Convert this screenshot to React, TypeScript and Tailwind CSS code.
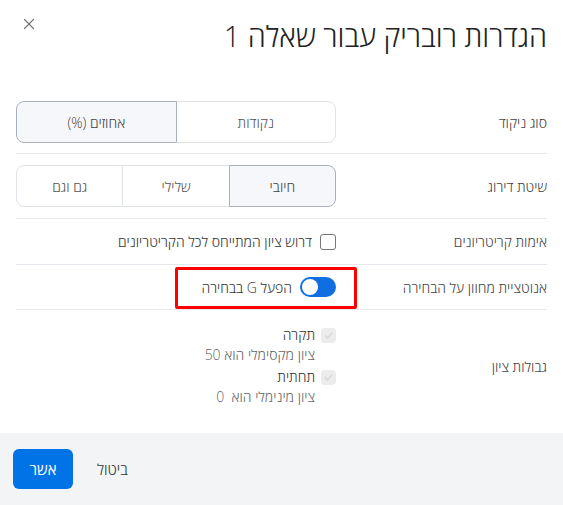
import { X } from "lucide-react";

function Segmented({ items, selected }: { items: string[]; selected: number }) {
	return (
		<div className="flex h-[42px] w-full">
			{items.map((item, i) => (
				<div
					key={item}
					className={
						"flex flex-1 items-center justify-center border text-[14px] " +
						(i > 0 ? "-mr-px " : "") +
						(i === 0 ? "rounded-r-lg " : "") +
						(i === items.length - 1 ? "rounded-l-lg " : "") +
						(i === selected
							? "relative z-10 border-[#aab1bd] bg-[#f5f7fa] text-[#444]"
							: "border-[#dfe2e8] bg-white text-[#555]")
					}
				>
					{item}
				</div>
			))}
		</div>
	);
}

function Row({
	label,
	children,
	last,
	className,
}: {
	label: string;
	children: React.ReactNode;
	last?: boolean;
	className?: string;
}) {
	return (
		<div
			className={
				"grid grid-cols-[211px_1fr] items-center " +
				(last ? "" : "border-b border-[#e6e8ee] ") +
				(className ?? "")
			}
		>
			<div className="text-[14px] text-[#444]">{label}</div>
			<div>{children}</div>
		</div>
	);
}

function DisabledCheck() {
	return (
		<div className="flex h-[15px] w-[15px] shrink-0 items-center justify-center rounded-sm bg-[#ececec]">
			<svg width="11" height="11" viewBox="0 0 12 12" fill="none">
				<path d="M2.5 6.2 5 8.6 9.6 3.4" stroke="#d6d6d6" strokeWidth="1.6" strokeLinecap="round" strokeLinejoin="round" />
			</svg>
		</div>
	);
}

export default function App() {
	return (
		<div
			dir="rtl"
			className="flex h-[505px] w-[563px] flex-col bg-white font-['Open_Sans','Liberation_Sans',sans-serif] font-light"
		>
			{/* כותרת */}
			<div className="flex h-[91px] items-start justify-between px-4 pt-[15px]">
				<h1 className="text-[29px] font-light leading-[42px] text-[#222]">הגדרות רובריק עבור שאלה 1</h1>
				<button className="ml-[4px] mt-0 text-[#777]">
					<X size={18} strokeWidth={1.6} />
				</button>
			</div>

			<div className="flex-1 px-4">
				<Row label="סוג ניקוד" className="py-[10px]">
					<Segmented items={["נקודות", "אחוזים (%)"]} selected={1} />
				</Row>
				<Row label="שיטת דירוג" className="py-[11px]">
					<Segmented items={["חיובי", "שלילי", "גם וגם"]} selected={0} />
				</Row>
				<Row label="אימות קריטריונים" className="h-[46px]">
					<label className="flex items-center gap-2 text-[14px] text-[#333]">
						<span className="h-[16px] w-[16px] shrink-0 rounded-[3px] border border-[#777] bg-white" />
						דרוש ציון המתייחס לכל הקריטריונים
					</label>
				</Row>
				<Row label="אנוטציית מחוון על הבחירה" className="h-[45px]">
					<div className="relative flex w-fit items-center gap-2">
						<div className="flex h-[20px] w-[36px] items-center justify-end rounded-full bg-[#0f6fe0] p-[2px]">
							<div className="h-[16px] w-[16px] rounded-full bg-white" />
						</div>
						<span className="text-[14px] text-[#333]">הפעל G בבחירה</span>
						<div className="pointer-events-none absolute -bottom-[11px] -left-[27px] -right-[21px] -top-[10px] rounded-[2px] border-[3px] border-[#ff0000]" />
					</div>
				</Row>
				<Row label="גבולות ציון" last className="py-[15px]">
					<div className="flex flex-col gap-[2px]">
						<div className="flex items-start gap-[6px]">
							<div className="mt-[3px]">
								<DisabledCheck />
							</div>
							<div className="text-[14px] leading-[20px]">
								<div className="text-[#333]">תקרה</div>
								<div className="text-[#666]">ציון מקסימלי הוא 50</div>
							</div>
						</div>
						<div className="flex items-start gap-[6px]">
							<div className="mt-[3px]">
								<DisabledCheck />
							</div>
							<div className="text-[14px] leading-[20px]">
								<div className="text-[#333]">תחתית</div>
								<div className="whitespace-pre text-[#666]">ציון מינימלי הוא  0</div>
							</div>
						</div>
					</div>
				</Row>
			</div>

			{/* פוטר */}
			<div className="flex h-[72px] items-center justify-end gap-6 bg-[#f3f4f6] pl-[13px]">
				<button className="text-[15px] text-[#333]">ביטול</button>
				<button className="h-[40px] w-[60px] rounded-md bg-[#0073e6] text-[15px] font-normal text-white">אשר</button>
			</div>
		</div>
	);
}
